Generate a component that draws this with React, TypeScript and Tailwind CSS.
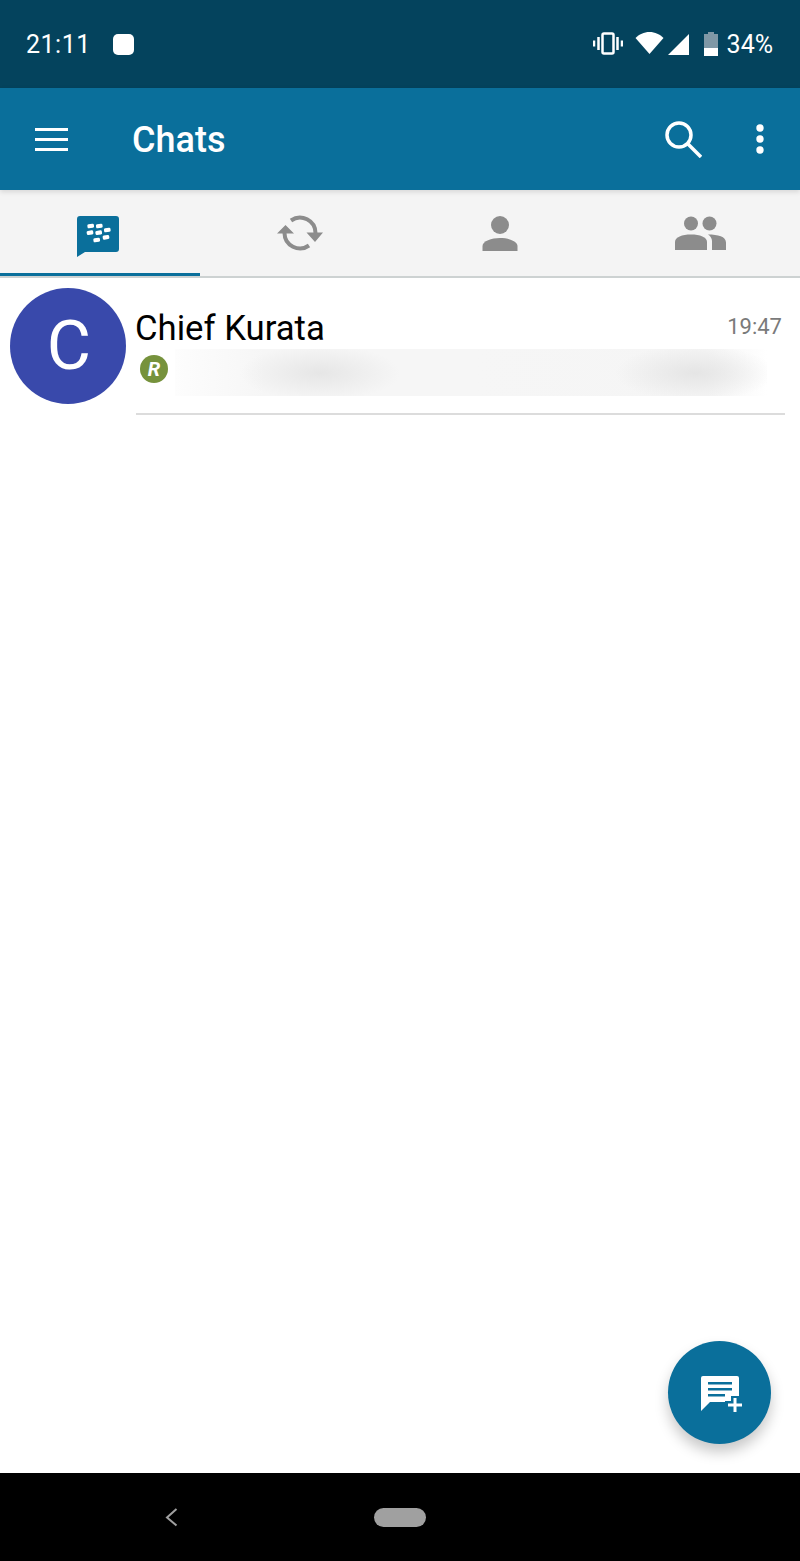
const font = { fontFamily: "Roboto, sans-serif" }

const bbmDots = [
  [13.7, 10],
  [22.3, 10],
  [13, 16.7],
  [21.7, 16.7],
  [30.3, 14],
  [29, 21.3],
  [19.7, 24],
]

function VibrateIcon() {
  return (
    <svg width="30" height="24" viewBox="0 0 30 24" fill="none" stroke="white">
      <rect x="9.5" y="1.5" width="11" height="20" rx="1.5" strokeWidth="2.5" />
      <path d="M5.5 5v13M24.500 5v13" strokeWidth="2.500" />
      <path d="M1 8.500v6M29 8.500v6" strokeWidth="2.500" />
    </svg>
  )
}

function StatusIcons() {
  return (
    <div className="flex items-center">
      <VibrateIcon />
      <svg className="ml-[12px] mb-[2px]" width="29" height="22" viewBox="0 0 29 22" fill="white">
        <path d="M14.5 22L0.5 6C4 2.5 9 0 14.5 0S25 2.5 28.5 6z" />
      </svg>
      <svg className="ml-[4px]" width="22" height="21" viewBox="0 0 22 21" fill="white">
        <path d="M21 0v21H0z" />
      </svg>
      <svg className="ml-[14px]" width="14" height="24" viewBox="0 0 14 24">
        <path d="M4 0h6v2h4v22H0V2h4z" fill="#7f98a6" />
        <path d="M0 16h14v8H0z" fill="white" />
      </svg>
      <span className="ml-[9px] text-[25px] leading-none text-white">34%</span>
    </div>
  )
}

function TabChats() {
  return (
    <svg className="ml-[-4px] mt-[6px]" width="42" height="41" viewBox="0 0 42 41">
      <path
        d="M3 0h36a3 3 0 0 1 3 3v30a3 3 0 0 1-3 3H8L0 41V3a3 3 0 0 1 3-3z"
        fill="#0a6f9b"
      />
      <g fill="white">
        {bbmDots.map(([cx, cy]) => (
          <rect
            key={`${cx}-${cy}`}
            x={cx - 3.3}
            y={cy - 2.1}
            width="6.6"
            height="4.2"
            rx="1.4"
            transform={`rotate(-8 ${cx} ${cy})`}
          />
        ))}
      </g>
    </svg>
  )
}

function TabSync() {
  return (
    <svg width="46" height="37" viewBox="0 0 46 37" fill="none">
      <path d="M14 5.500A15.500 15.500 0 0 1 38.500 18" stroke="#8c8c8c" strokeWidth="4" />
      <path d="M7.500 18A15.500 15.500 0 0 0 32 30.500" stroke="#8c8c8c" strokeWidth="4" />
      <path d="M0 18.500L8.500 10l8.500 8.500zM29.500 17.500h16.500l-8 9.500z" fill="#8c8c8c" />
    </svg>
  )
}

function TabContact() {
  return (
    <svg width="36" height="35" viewBox="0 0 36 35" fill="#8c8c8c">
      <circle cx="18" cy="9" r="9" />
      <path d="M0.500 35v-5c0-5 9-8 17.500-8s17.500 3 17.500 8v5z" />
    </svg>
  )
}

function TabGroups() {
  return (
    <svg width="51" height="34" viewBox="0 0 51 34" fill="#8c8c8c">
      <circle cx="16" cy="7.500" r="7" />
      <circle cx="34.500" cy="7.500" r="7" />
      <path d="M0 34v-8c0-5 7-7.500 16-7.500S32 21 32 26v8z" />
      <path d="M33 18.500c10 0 18 2 18 8v7.500H37v-9c0-2.500-1.500-5-4-6.500z" />
    </svg>
  )
}

function Tab({ active, children }: { active?: boolean; children: React.ReactNode }) {
  return (
    <div
      className={
        active
          ? "flex h-[86px] items-center justify-center border-b-[3px] border-[#0a6f9b] pt-[3px]"
          : "flex h-[86px] items-center justify-center border-b-[3px] border-transparent pt-[3px]"
      }
    >
      {children}
    </div>
  )
}

export default function App() {
  return (
    <div className="flex h-[1561px] w-[800px] flex-col overflow-hidden bg-white" style={font}>
      {/* status bar */}
      <div className="flex h-[88px] shrink-0 items-center justify-between bg-[#04435d] pl-[26px] pr-[27px]">
        <div className="flex items-center">
          <span className="text-[25px] leading-none tracking-[0.5px] text-white">21:11</span>
          <div className="ml-[22px] h-[21px] w-[21px] rounded-[5px] bg-white" />
        </div>
        <StatusIcons />
      </div>

      {/* toolbar */}
      <div className="relative z-10 flex h-[102px] shrink-0 items-center bg-[#0a6f9b] pl-[35px] pr-[36px] shadow-[0_2px_5px_rgba(0,0,0,0.12)]">
        <div className="flex w-[33px] flex-col gap-[7px]">
          <div className="h-[3px] bg-white" />
          <div className="h-[3px] bg-white" />
          <div className="h-[3px] bg-white" />
        </div>
        <span className="ml-[64px] mt-[2px] text-[36px] font-medium leading-none text-white">Chats</span>
        <svg className="ml-auto" width="37" height="37" viewBox="0 0 37 37" fill="none" stroke="white">
          <circle cx="14" cy="14" r="12" strokeWidth="3.500" />
          <path d="M23 23l13 13" strokeWidth="3.500" />
        </svg>
        <svg className="ml-[54px]" width="8" height="30" viewBox="0 0 8 30" fill="white">
          <circle cx="4" cy="4" r="3.700" />
          <circle cx="4" cy="15" r="3.700" />
          <circle cx="4" cy="26" r="3.700" />
        </svg>
      </div>

      {/* tabs */}
      <div className="grid h-[88px] shrink-0 grid-cols-4 border-b-2 border-[#cdd2d2] bg-[#f4f4f4]">
        <Tab active>
          <TabChats />
        </Tab>
        <Tab>
          <TabSync />
        </Tab>
        <Tab>
          <TabContact />
        </Tab>
        <Tab>
          <TabGroups />
        </Tab>
      </div>

      {/* chat list + fab */}
      <div className="relative flex-1">
        <div className="flex pl-[10px] pr-[15px] pt-[10px]">
          <div className="flex h-[116px] w-[116px] shrink-0 items-center justify-center rounded-full bg-[#3949ab] pl-[2px] text-[68px] leading-none text-white">
            C
          </div>
          <div className="ml-[10px] h-[127px] flex-1 border-b-2 border-[#dcdcdc] pt-[20px]">
            <div className="flex items-start justify-between pr-[3px]">
              <span className="ml-[-1px] text-[34.700px] leading-[40px] text-black">Chief Kurata</span>
              <span className="mt-[6px] text-[22px] leading-[26px] text-[#7a7a7a]">19:47</span>
            </div>
            <div className="mt-[1px] flex items-center">
              <div className="mb-[7px] ml-[4px] flex h-[28px] w-[28px] items-center justify-center rounded-full bg-[#76923c] text-[20px] font-bold italic leading-none text-white">
                R
              </div>
              <div className="ml-[7px] h-[47px] w-[592px] bg-[radial-gradient(ellipse_80px_28px_at_145px_24px,#e6e6e6,transparent),radial-gradient(ellipse_80px_28px_at_520px_24px,#e5e5e5,transparent),linear-gradient(90deg,#fdfdfd,#f6f6f6_15%,#f6f6f6_50%,#f5f5f5_90%,#ffffff)]" />
            </div>
          </div>
        </div>

        <button className="absolute bottom-[29px] right-[29px] flex h-[103px] w-[103px] items-center justify-center rounded-full bg-[#0a6f9b] shadow-[0_8px_14px_rgba(0,0,0,0.22)]">
          <svg className="ml-[4px] mt-[2px]" width="41" height="36" viewBox="0 0 41 36" fill="white">
            <path d="M2 0h34a2 2 0 0 1 2 2v18h-8v5h-6v1H9l-9 9V2a2 2 0 0 1 2-2z" />
            <path d="M7 6h24v2.500H7zM7 12h24v2.500H7zM7 18h17v2.500H7z" fill="#0a6f9b" />
            <path d="M32.500 22h3v5.500H41v3h-5.500V36h-3v-5.500H27v-3h5.500z" />
          </svg>
        </button>
      </div>

      {/* nav bar */}
      <div className="relative flex h-[88px] shrink-0 items-center bg-black pl-[165px]">
        <svg width="13" height="19" viewBox="0 0 13 19" fill="none" stroke="#a0a0a0" strokeWidth="2">
          <path d="M11.500 1L2 9.500l9.500 8" />
        </svg>
        <div className="ml-[196px] h-[19px] w-[52px] rounded-full bg-[#a0a0a0]" />
      </div>
    </div>
  )
}
